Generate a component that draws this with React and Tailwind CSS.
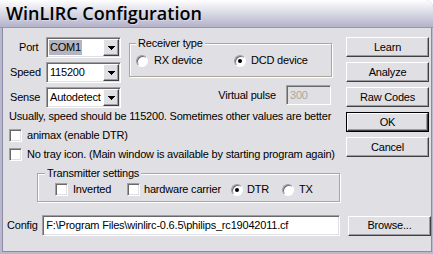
const sunken =
  "border border-t-[#a0a0a0] border-l-[#a0a0a0] border-r-white border-b-white shadow-[inset_1px_1px_0_#696969,inset_-1px_-1px_0_#e0dfe3]";
const raised =
  "border border-t-white border-l-white border-r-[#404040] border-b-[#404040] shadow-[inset_-1px_-1px_0_#9d9da1] bg-[#e0dfe3]";

const Arrow = () => (
  <svg width="7" height="4" viewBox="0 0 7 4" shapeRendering="crispEdges">
    <rect x="0" y="0" width="7" height="1" fill="#000" />
    <rect x="1" y="1" width="5" height="1" fill="#000" />
    <rect x="2" y="2" width="3" height="1" fill="#000" />
    <rect x="3" y="3" width="1" height="1" fill="#000" />
  </svg>
);

const Combo = ({ value, selected }) => (
  <div className={`flex h-[21px] w-[75px] items-stretch bg-white p-[1px] ${sunken}`}>
    <div className="flex flex-1 items-center overflow-hidden whitespace-nowrap pl-[1px]">
      <span className={`inline-block h-[15px] px-[1px] leading-[15px] ${selected ? "bg-[#b2b4bf]" : ""}`}>
        {value}
      </span>
    </div>
    <div className={`flex w-[16px] items-center justify-center ${raised}`}>
      <Arrow />
    </div>
  </div>
);

const Check = () => <span className={`inline-block size-[13px] shrink-0 bg-white ${sunken}`} />;

const Radio = ({ on }) => (
  <span className="flex size-[12px] shrink-0 items-center justify-center rounded-full border border-t-[#9d9da1] border-l-[#9d9da1] border-r-white border-b-white bg-white shadow-[inset_1px_1px_0_#696969]">
    {on && <span className="size-[4px] rounded-full bg-black" />}
  </span>
);

const Button = ({ children, primary }) =>
  primary ? (
    <div className="h-[20px] w-[83px] border border-black">
      <div className={`flex h-full items-center justify-center ${raised}`}>{children}</div>
    </div>
  ) : (
    <div className={`flex h-[20px] w-[83px] items-center justify-center ${raised}`}>{children}</div>
  );

const Field = ({ label, pl, children }) => (
  <div className="flex h-[21px] items-center">
    <span className={`w-[43px] ${pl}`}>{label}</span>
    {children}
  </div>
);

export default function App() {
  return (
    <div className="h-[254px] w-[433px] bg-white">
      <div className="flex h-full flex-col overflow-hidden rounded-tr-[7px] bg-[#b9b8cd] font-['Liberation_Sans',Arial,sans-serif] text-[11px] leading-[13px] tracking-[-0.2px] text-black">
        <div className="flex h-[28px] items-center border-b border-[#9897b0] bg-[linear-gradient(to_bottom,#ffffff_0%,#f3f3f7_15%,#d8d8e4_50%,#c2c1d5_80%,#b3b2c9_100%)] pl-[6px]">
          <span className="font-['Open_Sans',sans-serif] text-[18px] font-semibold tracking-normal [text-shadow:1px_1px_0_#d8d8e4]">
            WinLIRC Configuration
          </span>
        </div>

        <div className="mb-[2px] ml-[2px] mr-[1px] flex-1 border border-t-0 border-[#8c8ba5] bg-[#e0dfe3] pt-[9px]">
          <div className="flex">
            <div className="w-[343px]">
              <div className="flex">
                <div className="flex flex-col gap-[4px]">
                  <Field label="Port" pl="pl-[16px]">
                    <Combo value="COM1" selected />
                  </Field>
                  <Field label="Speed" pl="pl-[7px]">
                    <Combo value="115200" />
                  </Field>
                  <Field label="Sense" pl="pl-[7px]">
                    <Combo value="Autodetect" />
                  </Field>
                </div>

                <div className="ml-[8px] flex w-[203px] flex-col">
                  <fieldset className="border border-[#aca899] pb-[9px] shadow-[1px_1px_0_#fff,inset_1px_1px_0_#fff]">
                    <legend className="ml-[6px] bg-[#e0dfe3] px-[2px]">Receiver type</legend>
                    <div className="mt-[4px] flex items-center pl-[6px]">
                      <div className="flex w-[98px] items-center gap-[6px]">
                        <Radio />
                        <span>RX device</span>
                      </div>
                      <div className="flex items-center gap-[5px]">
                        <Radio on />
                        <span>DCD device</span>
                      </div>
                    </div>
                  </fieldset>
                  <div className="mt-[8px] flex items-center justify-end gap-[10px] pr-[1px]">
                    <span>Virtual pulse</span>
                    <div className={`flex h-[20px] w-[45px] items-center bg-[#e0dfe3] pl-[3px] text-[#aca899] ${sunken}`}>
                      300
                    </div>
                  </div>
                </div>
              </div>

              <p className="mt-[2px] pl-[6px] whitespace-nowrap">
                Usually, speed should be 115200. Sometimes other values are better
              </p>
              <div className="mt-[6px] flex items-center gap-[5px] pl-[6px]">
                <Check />
                <span>animax (enable DTR)</span>
              </div>
              <div className="mt-[6px] flex items-center gap-[5px] pl-[6px] whitespace-nowrap">
                <Check />
                <span>No tray icon. (Main window is available by starting program again)</span>
              </div>

              <fieldset className="ml-[34px] mt-[6px] w-[303px] border border-[#aca899] pb-[5px] shadow-[1px_1px_0_#fff,inset_1px_1px_0_#fff]">
                <legend className="ml-[7px] bg-[#e0dfe3] px-[2px]">Transmitter settings</legend>
                <div className="mt-[3px] flex items-center pl-[17px] whitespace-nowrap">
                  <div className="flex w-[72px] items-center gap-[5px]">
                    <Check />
                    <span>Inverted</span>
                  </div>
                  <div className="flex w-[104px] items-center gap-[4px]">
                    <Check />
                    <span>hardware carrier</span>
                  </div>
                  <div className="flex w-[51px] items-center gap-[4px]">
                    <Radio on />
                    <span>DTR</span>
                  </div>
                  <div className="flex items-center gap-[5px]">
                    <Radio />
                    <span>TX</span>
                  </div>
                </div>
              </fieldset>
            </div>

            <div className="flex flex-col gap-[5px]">
              <Button>Learn</Button>
              <Button>Analyze</Button>
              <Button>Raw Codes</Button>
              <Button primary>OK</Button>
              <Button>Cancel</Button>
            </div>
          </div>

          <div className="mt-[13px] flex items-center">
            <span className="w-[41px] pl-[4px]">Config</span>
            <div className={`flex h-[21px] w-[312px] items-center bg-white pl-[3px] whitespace-nowrap ${sunken}`}>
              F:\Program Files\winlirc-0.6.5\philips_rc19042011.cf
            </div>
            <div className="ml-[8px]">
              <Button>Browse...</Button>
            </div>
          </div>
        </div>
      </div>
    </div>
  );
}
